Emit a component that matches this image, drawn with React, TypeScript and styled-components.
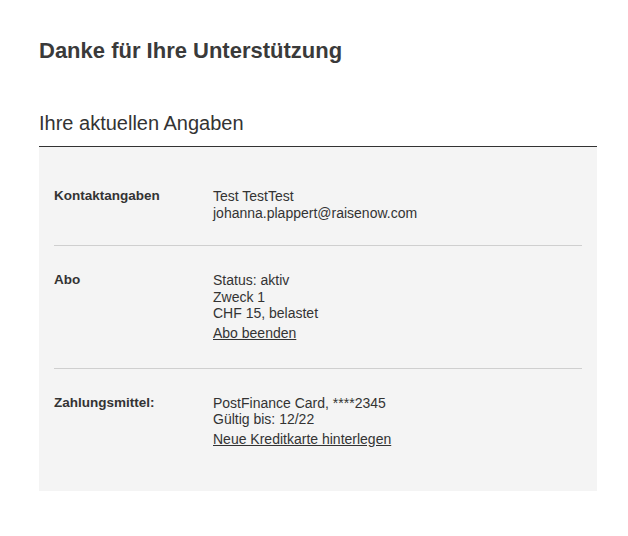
import styled, { createGlobalStyle } from 'styled-components';

const GlobalStyle = createGlobalStyle`
	body {
		margin: 0;
		background: #fff;
		font-family: "Liberation Sans", Arial, sans-serif;
		color: #333;
	}
`

const Page = styled.div`
	width: 558px;
	padding: 38px 0 0 39px;
`

const Title = styled.h1`
	margin: 0;
	font-size: 22px;
	line-height: 26px;
	font-weight: bold;
	color: #3a3a3a;
`

const SectionTitle = styled.h2`
	margin: 47px 0 0;
	padding-bottom: 11px;
	font-size: 20px;
	line-height: 24px;
	font-weight: normal;
	color: #333;
	border-bottom: 1px solid #333;
`

const Panel = styled.div`
	background: #f4f4f4;
	padding: 15px 15px 17px;
`

const Row = styled.div`
	display: grid;
	grid-template-columns: 159px 1fr;
	padding: 26px 0 24px;
	font-size: 14px;
	line-height: 16.5px;
	& + & {
		border-top: 1px solid #cfcfcf;
		padding-top: 26px;
		padding-bottom: 26.5px;
	}
`

const Label = styled.div`
	font-size: 13.5px;
	font-weight: bold;
	color: #333;
`

const Value = styled.div`
	color: #333;
	p {
		margin: 0;
	}
`

const Action = styled.a`
	display: inline-block;
	margin-top: 3px;
	color: #333;
	text-decoration: underline;
	text-underline-offset: 1px;
	cursor: pointer;
`

type RowProps = {
	label: string,
	lines: string[],
	action?: string,
}

function InfoRow({label, lines, action}: RowProps) {
	return (
		<Row>
			<Label>{label}</Label>
			<Value>
				{lines.map((line) => <p key={line}>{line}</p>)}
				{action && <Action>{action}</Action>}
			</Value>
		</Row>
	);
}

function App() {
	return (
		<>
			<GlobalStyle/>
			<Page>
				<Title>Danke für Ihre Unterstützung</Title>
				<SectionTitle>Ihre aktuellen Angaben</SectionTitle>
				<Panel>
					<InfoRow label="Kontaktangaben" lines={['Test TestTest', 'johanna.plappert@raisenow.com']}/>
					<InfoRow label="Abo" lines={['Status: aktiv', 'Zweck 1', 'CHF 15, belastet']} action="Abo beenden"/>
					<InfoRow label="Zahlungsmittel:" lines={['PostFinance Card, ****2345', 'Gültig bis: 12/22']} action="Neue Kreditkarte hinterlegen"/>
				</Panel>
			</Page>
		</>
	);
}

export default App;
